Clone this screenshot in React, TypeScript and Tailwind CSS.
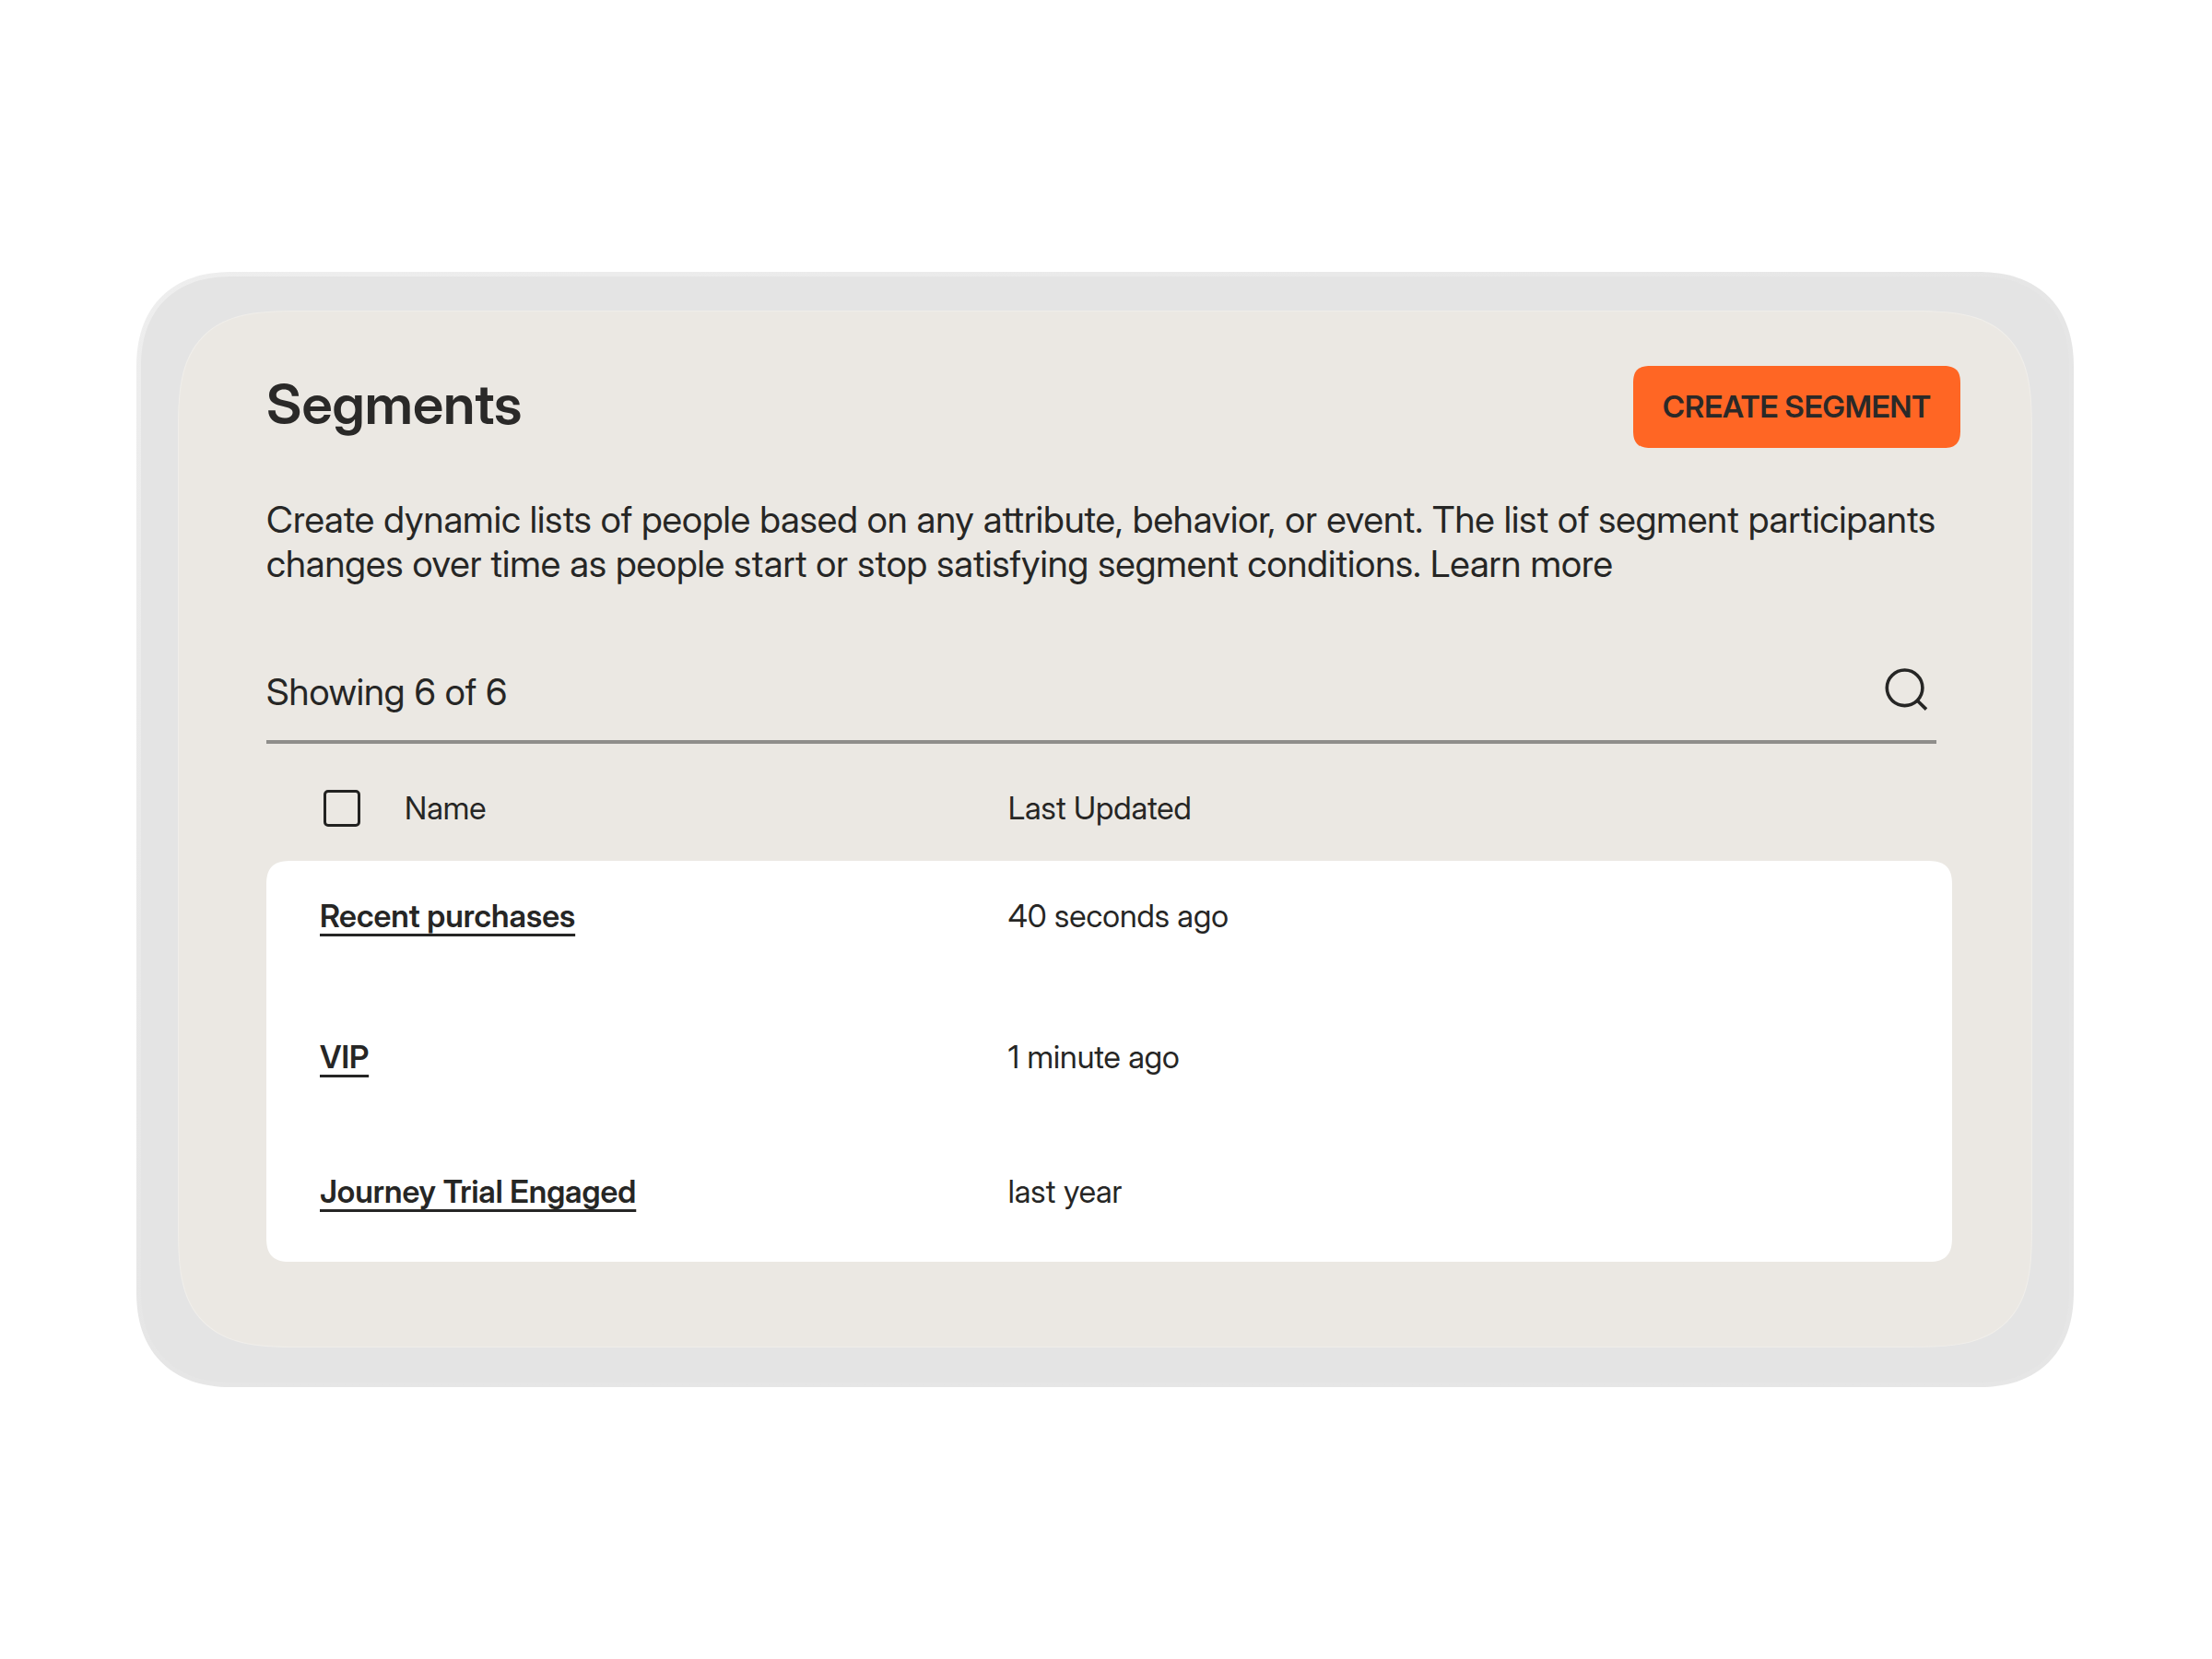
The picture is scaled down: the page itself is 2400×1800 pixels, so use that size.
import React, { FC, useState } from "react";

interface Segment {
  name: string;
  updated: string;
  rowClass: string;
}

const segments: Segment[] = [
  { name: "Recent purchases", updated: "40 seconds ago", rowClass: "h-[153px]" },
  { name: "VIP", updated: "1 minute ago", rowClass: "h-[146px]" },
  { name: "Journey Trial Engaged", updated: "last year", rowClass: "h-[136px]" },
];

const SearchIcon: FC = () => (
  <svg className="size-14" viewBox="0 0 56 56" fill="none" stroke="currentColor" strokeWidth="3.6" aria-hidden="true">
    <circle cx="26.6" cy="23.3" r="19.3" />
    <path d="M40.2 37 50 46.6" />
  </svg>
);

const SegmentRow: FC<{ segment: Segment }> = ({ segment }) => (
  <tr className={`group align-top ${segment.rowClass}`}>
    <td className="bg-white pt-10 pl-[58px] [corner-shape:superellipse(1.5)] group-first:rounded-tl-[28px] group-last:rounded-bl-[28px]">
      <a
        href="#"
        className="font-semibold underline decoration-3 underline-offset-7 [text-decoration-skip-ink:none]"
      >
        {segment.name}
      </a>
    </td>
    <td className="bg-white pt-10 [corner-shape:superellipse(1.5)] group-first:rounded-tr-[28px] group-last:rounded-br-[28px]">
      {segment.updated}
    </td>
  </tr>
);

export default function App() {
  const [allChecked, setAllChecked] = useState(false);

  return (
    <div className="flex min-h-screen items-center bg-white pr-[150px] pl-[148px] font-['Inter_Display','Inter',sans-serif] text-[#262625]">
      <div className="w-full rounded-[104px] bg-linear-to-br from-[#eeeeee] via-[#e6e6e6] to-[#e6e6e6] p-[5px] [corner-shape:superellipse(1.2)]">
        <div className="rounded-[99px] bg-[#e4e4e4] px-10 pt-[37px] pb-[38px] [corner-shape:superellipse(1.2)]">
          <main className="rounded-[134px] border border-[#f0eeea] bg-[#ebe8e3] pt-[59px] pr-[77px] pb-[92px] pl-[95px] [corner-shape:superellipse(1.6)]">
            <header className="flex items-start justify-between">
              <h1 className="text-[60px] leading-[82px] font-semibold text-[#2a2928]">Segments</h1>
              <button
                type="button"
                className="h-[89px] rounded-[20px] bg-[#ff6624] px-8 text-[33px] font-semibold text-[#2a2928] [corner-shape:superellipse(1.5)]"
              >
                CREATE SEGMENT
              </button>
            </header>

            <p className="mt-[54px] text-[40px] leading-12">
              Create dynamic lists of people based on any attribute, behavior, or event. The list of segment
              participants changes over time as people start or stop satisfying segment conditions.{" "}
              <a href="#">Learn more</a>
            </p>

            <div className="mt-[87px] mr-[26px] flex items-center justify-between border-b-4 border-[#8f8e8b] pr-[5px] pb-6">
              <span className="text-[40px] leading-12">Showing 6 of 6</span>
              <button type="button" aria-label="Search">
                <SearchIcon />
              </button>
            </div>

            <div className="mr-[9px]">
              <table className="w-full table-fixed border-separate border-spacing-0 text-left text-[34px] leading-10">
                <thead>
                  <tr className="h-[127px]">
                    <th className="w-[44%] pt-3 pl-[62px] font-normal">
                      <label className="flex items-center gap-12">
                        <input
                          type="checkbox"
                          checked={allChecked}
                          onChange={(e) => setAllChecked(e.target.checked)}
                          className="size-10 appearance-none rounded-[5px] border-3 border-[#222221] checked:bg-[#222221]"
                        />
                        Name
                      </label>
                    </th>
                    <th className="pt-3 font-normal">Last Updated</th>
                  </tr>
                </thead>
                <tbody>
                  {segments.map((segment) => (
                    <SegmentRow key={segment.name} segment={segment} />
                  ))}
                </tbody>
              </table>
            </div>
          </main>
        </div>
      </div>
    </div>
  );
}
